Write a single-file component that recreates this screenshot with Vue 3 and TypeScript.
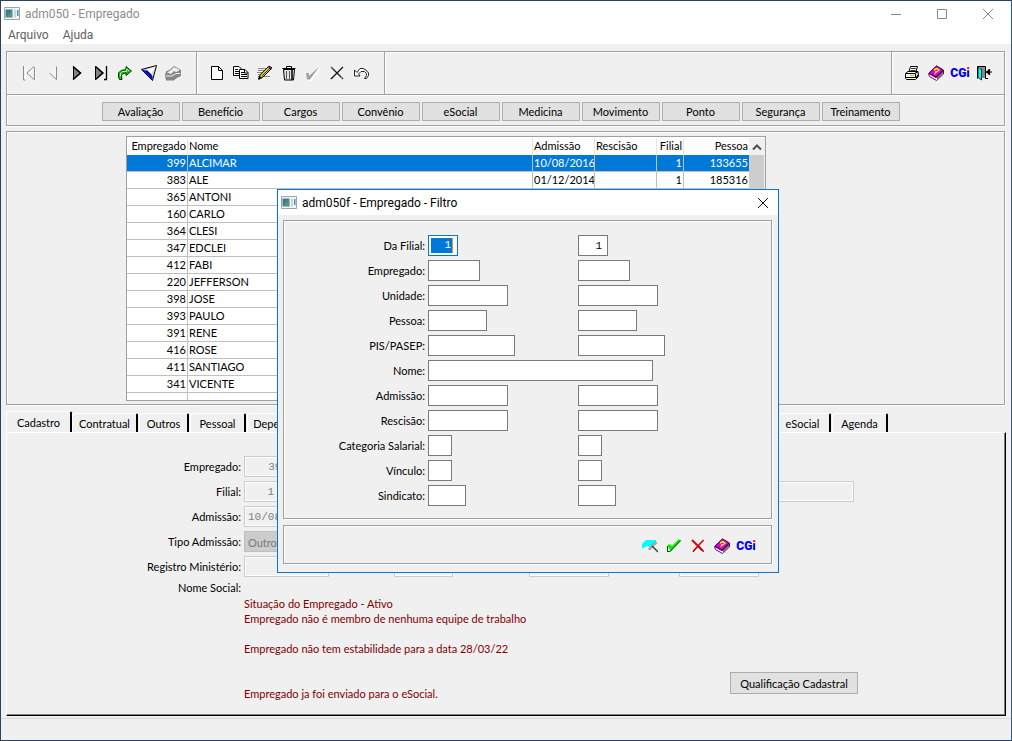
<script setup lang="ts">
interface Employee {
  id: number
  name: string
  admission?: string
  branch?: number
  person?: number
}
interface FilterRow {
  label: string
  size: string
  single?: boolean
  value?: string
}

const navIcons = ['first', 'prev', 'next', 'last', 'goto', 'filter', 'archive']
const editIcons = ['new', 'copy', 'edit', 'trash', 'checkoff', 'cancel', 'undo']
const sideIcons = ['print', 'help', 'cgi', 'exit']
const dialogIcons = ['clear', 'ok', 'delete', 'help', 'cgi']

const modules = ['Avaliação', 'Benefício', 'Cargos', 'Convênio', 'eSocial', 'Medicina', 'Movimento', 'Ponto', 'Segurança', 'Treinamento']

const employees: Employee[] = [
  { id: 399, name: 'ALCIMAR', admission: '10/08/2016', branch: 1, person: 133655 },
  { id: 383, name: 'ALE', admission: '01/12/2014', branch: 1, person: 185316 },
  { id: 365, name: 'ANTONI' },
  { id: 160, name: 'CARLO' },
  { id: 364, name: 'CLESI' },
  { id: 347, name: 'EDCLEI' },
  { id: 412, name: 'FABI' },
  { id: 220, name: 'JEFFERSON' },
  { id: 398, name: 'JOSE' },
  { id: 393, name: 'PAULO' },
  { id: 391, name: 'RENE' },
  { id: 416, name: 'ROSE' },
  { id: 411, name: 'SANTIAGO' },
  { id: 341, name: 'VICENTE' },
]

const tabs = [
  { name: 'Cadastro', cls: 't-active' },
  { name: 'Contratual', cls: 't-l' },
  { name: 'Outros', cls: 't-s' },
  { name: 'Pessoal', cls: 't-m' },
  { name: 'Dependentes', cls: 't-xl' },
  { name: 'eSocial', cls: 't-m t-end' },
  { name: 'Agenda', cls: 't-m' },
]

const filters: FilterRow[] = [
  { label: 'Da Filial:', size: 'w30', value: '1' },
  { label: 'Empregado:', size: 'w52' },
  { label: 'Unidade:', size: 'w80' },
  { label: 'Pessoa:', size: 'w59' },
  { label: 'PIS/PASEP:', size: 'w87' },
  { label: 'Nome:', size: 'w225', single: true },
  { label: 'Admissão:', size: 'w80' },
  { label: 'Rescisão:', size: 'w80' },
  { label: 'Categoria Salarial:', size: 'w24' },
  { label: 'Vínculo:', size: 'w24' },
  { label: 'Sindicato:', size: 'w38' },
]
</script>

<template>
  <svg class="defs" aria-hidden="true">
    <symbol id="i-first" viewBox="0 0 16 16"><path d="M3.500 1v14M13.500 1v14M13 1.500 6 8l7 6.500" fill="none" stroke="#fff" transform="translate(1 1)" /><path d="M2.500 1v14h2M13.500 2v13M13 14.500 6 8l7-6.500" fill="none" stroke="#8c8c8c" /></symbol>
    <symbol id="i-prev" viewBox="0 0 16 16"><path d="M11.500 1.500 4.500 8" stroke="#fff" /><path d="M11.500 1.500v13L4.500 8" fill="#f4f4f4" stroke="#8c8c8c" /></symbol>
    <symbol id="i-next" viewBox="0 0 16 16"><path d="M4.500 1.500v13L11.500 8z" fill="#808080" stroke="#000" /><path d="M4 1.500 11.500 8 4 14.500" fill="none" stroke="#000" stroke-width="1.500" /></symbol>
    <symbol id="i-last" viewBox="0 0 16 16"><path d="M2.500 1.500v13L9.500 8z" fill="#808080" stroke="#000" /><path d="M2.500 1.500 10 8l-7.500 6.500" fill="none" stroke="#000" stroke-width="1.500" /><path d="M11 14.500h2.500V1" fill="none" stroke="#000" stroke-width="1.300" /></symbol>
    <symbol id="i-goto" viewBox="0 0 16 16"><path d="M5 14.500H2.500L1.500 12V8L4 5.500l5-1V1.500L14.500 6 9 10.500V8L6 8.500l-1.500 2z" fill="#1fb81f" stroke="#003c00" /><path d="M3.500 11.500V8l2-1.500h4V4l3 2" fill="none" stroke="#9f9" /></symbol>
    <symbol id="i-filter" viewBox="0 0 16 16"><path d="M.5 4.500 15.500.5 11.500 15.500z" fill="#d8d8d8" stroke="#000" /><path d="m2.500 5 3 .5 6 6v3z" fill="#00f" /><path d="m5.500 5 9-3.500-4.500 8z" fill="#fff" /><path d="m5.500 5.500 5 5M1 4.500l10 10" stroke="#001070" stroke-width="1.200" /></symbol>
    <symbol id="i-archive" viewBox="0 0 16 16"><path d="M0 10 1 6.500l4-2L9 1l7 4v6l-5 2.500-2 2H1z" fill="#858585" /><path d="M2 7.500 6 5l3-3 6 3-4 2-2-1-3 3z" fill="#ededed" /><path d="M1 11h6l4-2.500h4M8 4.500l4 2" fill="none" stroke="#f4f4f4" /></symbol>
    <symbol id="i-new" viewBox="0 0 16 16"><path d="M2.500 1.500h7l4 4v9h-11zM9.500 1.500v4h4" fill="#fff" stroke="#000" /></symbol>
    <symbol id="i-copy" viewBox="0 0 16 16"><path d="M.5 1.500H6l2.500 2.500v6.500h-8z" fill="#fff" stroke="#000" /><path d="M6.500 4.500H12l3 3v6H6.500z" fill="#fff" stroke="#000" /><path d="M2 4.500h3M2 6.500h4M2 8.500h4M8 7.500h3M8 9.500h6M8 11.500h6M11.500 5v3H15" fill="none" stroke="#000" /></symbol>
    <symbol id="i-edit" viewBox="0 0 16 16"><path d="M1 3.500h9M1 5.500h8M0 7.500h7M1 9.500h4M1 11.500h12" stroke="#888" /><path d="m2 14 1-4 9-9 3 2-9 9z" fill="#d8d000" stroke="#000" /><path d="m11 2 1-1 3 2-1 2z" fill="#800080" /><path d="m1 15 1-4 3 2z" fill="#000" /><path d="m5 11 8-8" stroke="#000" stroke-width=".7" /></symbol>
    <symbol id="i-trash" viewBox="0 0 16 16"><path d="M2.500 4.500h11l-1 10.500h-9z" fill="#e4e4e4" stroke="#000" /><path d="M5.500 6v8M8.500 6v8" stroke="#555" /><path d="M11 5v10" stroke="#000" stroke-width="1.500" /><path d="M1.500 3.500h13M5.500 3V1.500h5V3" fill="none" stroke="#000" /></symbol>
    <symbol id="i-checkoff" viewBox="0 0 16 16"><path d="m2 8 3 5L15 3v2l-9 11H3z" fill="#fff" /><path d="M1 8h3v3l10-9-9 12.500H2z" fill="#a0a0a0" /></symbol>
    <symbol id="i-cancel" viewBox="0 0 16 16"><path d="m2 2 12 12M14 2 2 14" stroke="#111" stroke-width="1.200" /><path d="m2 2 3 2M1 14l3-3M11 12l3 1" stroke="#888" /></symbol>
    <symbol id="i-undo" viewBox="0 0 16 16"><path d="M1.500 5v6H7L5.500 9 8 6.500h3.500l2 2v2l-2 3h2l2-3V8L13 5 10 3.500H7L4 7.500z" fill="#fff" stroke="#111" stroke-width=".9" /></symbol>
    <symbol id="i-print" viewBox="0 0 16 16"><path d="M5 6.500 6.500 1.500h7L12 6.500" fill="#fff" stroke="#000" /><path d="M7 3.500h5M6.500 5.500h5" stroke="#000" stroke-width=".8" /><path d="M1.500 8.500 4 6.500h10l.5 5-3 3H2.500l-1-1z" fill="#fff" stroke="#000" /><path d="M2 8.500h9l3-2M2 12.500h9.500V9M12 13l2.500-3" fill="none" stroke="#000" stroke-width="1.200" /><path d="M6 10.500h4" stroke="#d8c800" stroke-width="1.500" /></symbol>
    <symbol id="i-help" viewBox="0 0 16 16"><path d="m.5 8.500 8-7.500 7 4v4l-7 6.500-7-4z" fill="#fff" stroke="#700070" /><path d="m1 8 7.500-7L15 5l-7 7z" fill="#d800d8" stroke="#600060" /><path d="m9 12 6-6v3l-6 6z" fill="#777" /><path d="m1 8.500 7 4 7-7" fill="none" stroke="#500050" stroke-width="1.300" /><path d="m6 5 3-1.500 2 1.500-2.500 2H7M6.500 8.500h1" fill="none" stroke="#ff0" stroke-width="1.400" /></symbol>
    <symbol id="i-exit" viewBox="0 0 16 16"><path d="M1.500 13.500v-12h8v12H12" fill="#fff" stroke="#000" /><path d="M4 2h5v11H6z" fill="#888" /><path d="m2 2 3.500 2.500v10.500L2 12.500z" fill="#0ff" stroke="#000" stroke-width=".8" /><path d="M10 7h6M13.500 4v6" stroke="#000" stroke-width="1.200" /><path d="m10 7 3-3v6z" fill="#000" /></symbol>
    <symbol id="i-clear" viewBox="0 0 16 16"><path d="M0 11V6l4-4h10v2L8 9 6 8 3 9z" fill="#0ff" /><path d="M14.500 4 7 11.500" stroke="#777" stroke-width="2.400" /><path d="m14.500 4-7 7" stroke="#eee" /><path d="m10 8 6 6" stroke="#333" stroke-width="1.300" /></symbol>
    <symbol id="i-ok" viewBox="0 0 16 16"><path d="m2 8 2 0 1 3 9-9" fill="none" stroke="#0e0" stroke-width="3" /><path d="M1.500 8v5.500h2.500L14.500 2.500" fill="none" stroke="#004800" /></symbol>
    <symbol id="i-delete" viewBox="0 0 16 16"><path d="m2 2 11 11" stroke="#e00000" stroke-width="2" /><path d="M13.500 2 3 13.500" stroke="#d00000" stroke-width="1.500" /><path d="m3 14 4-5M9 8l5 6" stroke="#a00" /></symbol>
    <symbol id="i-app" viewBox="0 0 16 14"><path d="M.5.500h15v12H.500z" fill="#f4f6f8" stroke="#9aa4ac" /><path d="M1.500 2.500h7v8h-7z" fill="#3c7a96" /><path d="m2 10 6-7v7z" fill="#4f9a70" /><path d="M10 2.500h2v8h-2z" fill="#cdd5dc" /><path d="M13 3h1.500v6H13z" fill="#4a90b0" /></symbol>
  </svg>

  <div class="window">
    <header class="titlebar">
      <svg class="app-icon"><use href="#i-app" /></svg>
      <span class="title">adm050 - Empregado</span>
      <div class="controls">
        <button aria-label="Minimizar"><svg viewBox="0 0 12 12"><path d="M1 6.500h10" /></svg></button>
        <button aria-label="Maximizar"><svg viewBox="0 0 12 12"><path d="M1.500 1.500h9v9h-9z" /></svg></button>
        <button aria-label="Fechar"><svg viewBox="0 0 12 12"><path d="m1 1 10 10M11 1 1 11" /></svg></button>
      </div>
    </header>
    <nav class="menubar">
      <button>Arquivo</button>
      <button>Ajuda</button>
    </nav>

    <div class="toolbar groove">
      <div class="tools nav-tools">
        <button v-for="i in navIcons" :key="i" class="tool" :aria-label="i"><svg><use :href="'#i-' + i" /></svg></button>
      </div>
      <div class="tools edit-tools">
        <button v-for="i in editIcons" :key="i" class="tool" :aria-label="i"><svg><use :href="'#i-' + i" /></svg></button>
      </div>
      <div class="tools side-tools">
        <button v-for="i in sideIcons" :key="i" class="tool" :aria-label="i">
          <span v-if="i === 'cgi'" class="cgi">CG<b>i</b></span>
          <svg v-else><use :href="'#i-' + i" /></svg>
        </button>
      </div>
    </div>
    <div class="modules groove">
      <button v-for="m in modules" :key="m" class="push">{{ m }}</button>
    </div>

    <section class="list groove">
      <div class="grid-box">
        <table class="grid">
          <colgroup>
            <col class="c-id" /><col /><col class="c-date" /><col class="c-date" /><col class="c-branch" /><col class="c-person" />
          </colgroup>
          <thead>
            <tr><th class="num">Empregado</th><th>Nome</th><th>Admissão</th><th>Rescisão</th><th class="num">Filial</th><th class="num">Pessoa</th></tr>
          </thead>
          <tbody>
            <tr v-for="(e, n) in employees" :key="e.id" :class="{ selected: n === 0 }">
              <td class="num">{{ e.id }}</td><td>{{ e.name }}</td><td>{{ e.admission }}</td><td></td><td class="num">{{ e.branch }}</td><td class="num">{{ e.person }}</td>
            </tr>
            <tr><td></td><td></td><td></td><td></td><td></td><td></td></tr>
          </tbody>
        </table>
        <div class="scroll">
          <button aria-label="Rolar para cima"><svg viewBox="0 0 10 8"><path d="m1 6.500 4-4 4 4" /></svg></button>
          <div class="thumb"></div>
        </div>
      </div>
    </section>

    <div class="tabs" role="tablist">
      <button v-for="(t, n) in tabs" :key="t.name" role="tab" :aria-selected="n === 0" class="tab" :class="t.cls">{{ t.name }}</button>
    </div>
    <main class="page">
      <div class="form">
        <label for="f-emp">Empregado:</label>
        <div><input id="f-emp" class="w48 right" value="399" disabled /></div>
        <label for="f-fil">Filial:</label>
        <div><input id="f-fil" class="w34 right" value="1" disabled /><input class="branch-name" aria-label="Nome da filial" disabled /></div>
        <label for="f-adm">Admissão:</label>
        <div><input id="f-adm" class="w80" value="10/08/2016" disabled /></div>
        <label for="f-tipo">Tipo Admissão:</label>
        <div><select id="f-tipo" disabled><option>Outros</option></select></div>
        <label for="f-reg">Registro Ministério:</label>
        <div class="registry">
          <input id="f-reg" class="w85" disabled />
          <input class="w59" aria-label="Livro" disabled />
          <input class="w80" aria-label="Folha" disabled />
          <input class="w80" aria-label="Data" disabled />
        </div>
      </div>
      <div class="summary">
        <span class="social">Nome Social:</span>
        <div class="notes">
          <p>Situação do Empregado - Ativo</p>
          <p>Empregado não é membro de nenhuma equipe de trabalho</p>
          <p class="apart">Empregado não tem estabilidade para a data 28/03/22</p>
          <p class="far">Empregado ja foi enviado para o eSocial.</p>
        </div>
        <button class="push qualify">Qualificação Cadastral</button>
      </div>
    </main>
    <footer class="status"></footer>

    <div class="dialog" role="dialog" aria-labelledby="dlg-title">
      <header class="titlebar">
        <svg class="app-icon"><use href="#i-app" /></svg>
        <span id="dlg-title" class="title">adm050f - Empregado - Filtro</span>
        <div class="controls">
          <button aria-label="Fechar filtro"><svg viewBox="0 0 12 12"><path d="m1 1 10 10M11 1 1 11" /></svg></button>
        </div>
      </header>
      <form class="filters groove" @submit.prevent>
        <template v-for="(f, n) in filters" :key="f.label">
          <label :for="'q' + n">{{ f.label }}</label>
          <div v-if="n === 0" class="focus-box w30"><input :id="'q' + n" :value="f.value" /></div>
          <input v-else :id="'q' + n" :class="[f.size, { wide: f.single }]" />
          <input v-if="!f.single" :class="[f.size, 'right']" :value="f.value" :aria-label="f.label + ' até'" />
        </template>
      </form>
      <div class="dialog-tools groove">
        <button v-for="i in dialogIcons" :key="i" class="tool" :aria-label="i">
          <span v-if="i === 'cgi'" class="cgi">CG<b>i</b></span>
          <svg v-else><use :href="'#i-' + i" /></svg>
        </button>
      </div>
    </div>
  </div>
</template>

<style>
body {
  background: #f0f0f0;
}
</style>

<style scoped>
.defs {
  position: absolute;
  width: 0;
  height: 0;
}
.window {
  position: relative;
  min-height: 100vh;
  display: flex;
  flex-direction: column;
  border: 1px solid #2a4260;
  border-right-color: #24608c;
  background: #f0f0f0;
  color: #000;
  font: 11px/14px Lato, "Liberation Sans", sans-serif;
}
.window *,
.window {
  box-sizing: border-box;
}
button,
input,
select {
  font: inherit;
  color: inherit;
  margin: 0;
  padding: 0;
  border: 0;
  border-radius: 0;
  background: none;
}
.groove {
  border: 1px solid #a0a0a0;
  box-shadow: 1px 1px 0 #fff, inset 1px 1px 0 #fff;
}
.titlebar {
  display: flex;
  align-items: center;
  height: 25px;
  padding-left: 3px;
  background: #fff;
  color: #8c8c8c;
  font: 12px/16px Roboto, sans-serif;
}
.app-icon {
  width: 16px;
  height: 14px;
  margin-right: 5px;
}
.controls {
  display: flex;
  margin-left: auto;
}
.controls button {
  display: grid;
  place-items: center;
  width: 46px;
  height: 24px;
}
.controls svg {
  width: 12px;
  height: 12px;
  fill: none;
  stroke: #888;
}
.menubar {
  display: flex;
  gap: 14px;
  height: 18px;
  padding: 0 7px;
  background: #fff;
  color: #606060;
  font: 12px/18px Roboto, sans-serif;
}
.toolbar {
  display: flex;
  height: 44px;
  margin: 7px 6px 0 5px;
}
.tools {
  display: flex;
  align-items: center;
}
.nav-tools {
  width: 190px;
  padding-left: 10px;
  border-right: 1px solid #a0a0a0;
}
.edit-tools {
  width: 188px;
  padding-left: 8px;
  border-right: 1px solid #a0a0a0;
  box-shadow: inset 1px 0 0 #fff, 1px 0 0 #fff;
}
.side-tools {
  width: 113px;
  margin-left: auto;
  padding-left: 8px;
  border-left: 1px solid #a0a0a0;
  box-shadow: inset 1px 0 0 #fff;
}
.tool {
  display: grid;
  place-items: center;
  width: 24px;
  height: 24px;
}
.tool svg {
  width: 16px;
  height: 16px;
}
.cgi {
  color: #00f;
  font: 900 12px/14px Roboto, sans-serif;
}
.cgi b {
  font-weight: inherit;
  background: linear-gradient(#e00000 5px, #00f 5px);
  background-clip: text;
  color: transparent;
}
.modules {
  display: flex;
  justify-content: center;
  align-items: center;
  gap: 2px;
  height: 31px;
  margin: 0 6px 0 5px;
  padding: 2px 10px 0 0;
  border-top-width: 0;
}
.push {
  width: 78px;
  height: 19px;
  border: 1px solid #adadad;
  background: #e1e1e1;
  line-height: 17px;
  white-space: nowrap;
}
.list {
  height: 274px;
  margin: 5px 6px 0 5px;
  padding: 4px 0 0 119px;
}
.grid-box {
  display: flex;
  width: 640px;
  height: 265px;
  padding-top: 1px;
  overflow: hidden;
  border: 1px solid #a0a0a0;
  background: #fff;
}
.grid {
  width: 622px;
  table-layout: fixed;
  border-collapse: separate;
  border-spacing: 0;
}
.c-id {
  width: 61px;
}
.c-date {
  width: 62px;
}
.c-branch {
  width: 27px;
}
.c-person {
  width: 65px;
}
th,
td {
  height: 17px;
  padding: 0 1px;
  overflow: hidden;
  border-right: 1px solid #c0c0c0;
  border-bottom: 1px solid #c0c0c0;
  font-weight: normal;
  line-height: 16px;
  text-align: left;
  white-space: nowrap;
}
th {
  border-bottom-color: #fff;
  border-right-color: #e4e4e4;
}
.num {
  text-align: right;
}
th:last-child,
td:last-child {
  border-right: 0;
}
.selected td {
  background: #0078d7;
  color: #fff;
}
.scroll {
  flex: 1;
  background: #f0f0f0;
}
.scroll button {
  display: grid;
  place-items: center;
  width: 16px;
  height: 17px;
}
.scroll svg {
  width: 10px;
  height: 8px;
  fill: none;
  stroke: #505050;
  stroke-width: 2;
}
.thumb {
  width: 15px;
  height: 90px;
  background: #cdcdcd;
}
.tabs {
  display: flex;
  align-items: flex-end;
  height: 21px;
  margin: 6px 6px 0 5px;
}
.tab {
  height: 19px;
  margin-right: 1px;
  padding-top: 1px;
  border-top: 1px solid #fff;
  border-left: 1px solid #fff;
  border-right: 2px solid #000;
  border-radius: 3px 2px 0 0;
}
.t-active {
  width: 66px;
  height: 21px;
  margin-right: 0;
}
.t-l {
  width: 66px;
}
.t-s {
  width: 50px;
}
.t-m {
  width: 56px;
}
.t-xl {
  width: 78px;
}
.t-end {
  margin-left: auto;
}
.tab:last-child {
  margin-right: 117px;
}
.page {
  flex: 1;
  margin: 0 5px 0 5px;
  padding: 23px 0 0;
  border-left: 1px solid #fff;
  border-top: 1px solid #fff;
  border-right: 1px solid #000;
  border-bottom: 1px solid #000;
  box-shadow: inset -1px -1px 0 #808080;
}
.form {
  display: grid;
  grid-template-columns: 234px 1fr;
  grid-auto-rows: 21px;
  gap: 4px 3px;
  line-height: 22px;
}
.form label {
  text-align: right;
}
.form > div {
  display: flex;
}
.form input,
.form select {
  height: 21px;
  padding: 0 3px;
  border: 1px solid #ccc;
  box-shadow: inset 0 0 0 1px #fff;
  color: #808080;
  font: 11px/19px "Liberation Mono", monospace;
}
.form select {
  appearance: none;
  width: 110px;
  border-color: #bfbfbf;
  background: #ccc;
  box-shadow: none;
  color: #787878;
  font: inherit;
  opacity: 1;
}
.form .branch-name {
  width: 560px;
  margin-left: 16px;
}
.right {
  text-align: right;
}
.registry input + input {
  margin-left: 65px;
}
.registry input:nth-child(3) {
  margin-left: 76px;
}
.registry input:nth-child(4) {
  margin-left: 70px;
}
.summary {
  display: grid;
  grid-template-columns: 234px 1fr auto;
  column-gap: 3px;
  padding: 3px 147px 0 0;
}
.social {
  line-height: 16px;
  text-align: right;
}
.notes {
  padding-top: 16px;
  color: #800000;
  line-height: 15px;
}
.notes p {
  margin: 0;
}
.notes .apart {
  margin-top: 15px;
}
.notes .far {
  margin-top: 30px;
}
.qualify {
  align-self: end;
  width: 128px;
  height: 22px;
  margin-bottom: 7px;
}
.status {
  height: 22px;
  margin-top: 2px;
  border-top: 1px solid #d7d7d7;
}
.dialog {
  position: absolute;
  left: 276px;
  top: 188px;
  width: 502px;
  height: 384px;
  border: 1px solid #0078d7;
  background: #f0f0f0;
}
.dialog .titlebar {
  height: 25px;
  color: #000;
}
.dialog .controls button {
  width: 30px;
}
.dialog .controls svg {
  stroke: #111;
}
.filters {
  display: grid;
  grid-template-columns: 141px 147px 1fr;
  grid-auto-rows: 21px;
  gap: 4px 3px;
  height: 299px;
  margin: 5px 6px 0 5px;
  padding-top: 14px;
  line-height: 22px;
}
.filters label {
  text-align: right;
}
.filters input {
  height: 21px;
  padding: 0 5px;
  border: 1px solid #7a7a7a;
  background: #fff;
  font: 11px/19px "Liberation Mono", monospace;
}
.filters .wide {
  grid-column: 2 / 4;
}
.focus-box {
  height: 21px;
  padding: 2px 4px 2px 2px;
  border: 1px solid #0078d7;
  background: #fff;
}
.filters .focus-box input {
  width: 100%;
  height: 15px;
  padding: 0 1px 0 0;
  border: 0;
  border-right: 1px solid #ff8728;
  background: #0078d7;
  color: #fff;
  line-height: 15px;
  text-align: right;
  display: block;
}
.w24 {
  width: 24px;
}
.w30 {
  width: 30px;
}
.w34 {
  width: 34px;
}
.w38 {
  width: 38px;
}
.w48 {
  width: 48px;
}
.w52 {
  width: 52px;
}
.w59 {
  width: 59px;
}
.w80 {
  width: 80px;
}
.w85 {
  width: 85px;
}
.w87 {
  width: 87px;
}
.w225 {
  width: 225px;
}
.dialog-tools {
  display: flex;
  justify-content: flex-end;
  align-items: center;
  height: 39px;
  margin: 6px 6px 0 5px;
  padding: 3px 13px 0 0;
}
</style>
